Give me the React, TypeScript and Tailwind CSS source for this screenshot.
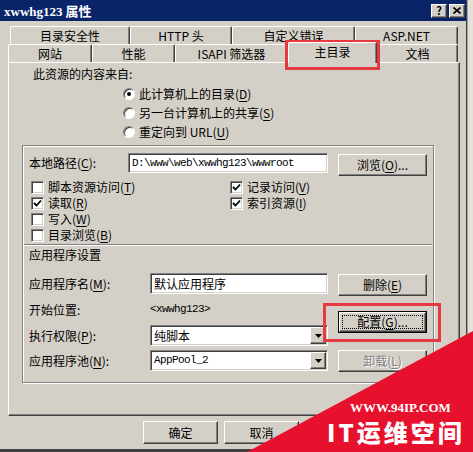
import React from "react";

const sunken =
  "border border-t-[#808080] border-l-[#808080] border-b-white border-r-white shadow-[inset_1px_1px_0_#404040,inset_-1px_-1px_0_#d4d0c8]";
const raised =
  "border border-t-white border-l-white border-b-[#404040] border-r-[#404040] shadow-[inset_-1px_-1px_0_#808080]";

function Acc({ pre, k, post = "" }: { pre: string; k: string; post?: string }) {
  return (
    <span className="whitespace-nowrap">
      {pre}(<span className="underline underline-offset-2">{k}</span>){post}
    </span>
  );
}

function Radio({ on }: { on?: boolean }) {
  return (
    <span className="w-[12px] h-[12px] rounded-full bg-white flex items-center justify-center border border-t-[#808080] border-l-[#808080] border-b-white border-r-white shadow-[inset_1px_1px_0_#404040]">
      {on && <span className="w-[4px] h-[4px] rounded-full bg-black" />}
    </span>
  );
}

function Check({ on }: { on?: boolean }) {
  return (
    <span className={`w-[13px] h-[13px] bg-white flex items-center justify-center shrink-0 ${sunken}`}>
      {on && (
        <svg width="9" height="9" viewBox="0 0 9 9">
          <polyline points="1,4 3.5,6.5 8,1.5" fill="none" stroke="#000" strokeWidth="1.8" />
        </svg>
      )}
    </span>
  );
}

function Btn({
  children,
  w = "w-[89px]",
  h = "h-[22px]",
  def,
  disabled,
  extra = "",
}: {
  children?: React.ReactNode;
  w?: string;
  h?: string;
  def?: boolean;
  disabled?: boolean;
  extra?: string;
}) {
  if (def) {
    return (
      <div className={`${w} ${h} ${extra} border border-black bg-[#d4d0c8]`}>
        <div className={`w-full h-full p-[2px] ${raised}`}>
          <div className="w-full h-full border border-dotted border-black flex items-center justify-center">
            {children}
          </div>
        </div>
      </div>
    );
  }
  return (
    <div
      className={`${w} ${h} ${extra} ${raised} flex items-center justify-center ${
        disabled ? "text-[#808080] [text-shadow:1px_1px_0_#fff]" : ""
      }`}
    >
      {children}
    </div>
  );
}

function SelectBox({ value, mono }: { value: string; mono?: boolean }) {
  return (
    <div className={`w-[178px] h-[21px] bg-white flex items-center ${sunken}`}>
      <span className={`flex-1 pl-[3px] ${mono ? "font-['Liberation_Mono',monospace] text-[11px] tracking-[-0.6px]" : ""}`}>
        {value}
      </span>
      <div className={`w-[16px] h-[17px] mr-[1px] bg-[#d4d0c8] flex items-center justify-center ${raised}`}>
        <svg width="7" height="4" viewBox="0 0 7 4">
          <polygon points="0,0 7,0 3.5,4" fill="#000" />
        </svg>
      </div>
    </div>
  );
}

function Tab({ w, children, sel }: { w: string; children: React.ReactNode; sel?: boolean }) {
  if (sel) {
    return (
      <div
        className={`${w} relative z-10 h-[21px] -mb-[1px] bg-[#d4d0c8] border-l border-t border-white border-r border-r-[#404040] shadow-[inset_-1px_0_0_#808080] rounded-t-[2px] flex items-start justify-center pt-[3px]`}
      >
        {children}
      </div>
    );
  }
  return (
    <div
      className={`${w} h-[18px] border-l border-t border-white border-r border-r-[#404040] shadow-[inset_-1px_0_0_#808080] rounded-t-[2px] flex items-center justify-center`}
    >
      {children}
    </div>
  );
}

export default function App() {
  return (
    <div className="relative w-[473px] h-[452px] overflow-hidden flex bg-[#d4d0c8] text-[12px] leading-none text-black font-['Noto_Sans_CJK_SC','Noto_Sans',sans-serif]">
      <div className="w-[466px] h-full flex flex-col">
        {/* Title bar */}
        <div className="h-[21px] bg-[#0a246a] flex items-center justify-between pl-[4px] pr-[1px]">
          <span className="text-white font-bold text-[13px]">
            <span className="font-['Liberation_Serif',serif]">xwwhg123</span> 属性
          </span>
          <div className="flex gap-[2px]">
            <div className={`w-[16px] h-[14px] bg-[#d4d0c8] ${raised} flex items-center justify-center font-bold text-[11px]`}>?</div>
            <div className={`w-[16px] h-[14px] bg-[#d4d0c8] ${raised} flex items-center justify-center`}>
              <svg width="8" height="7" viewBox="0 0 8 7">
                <path d="M0.5 0.5 L7.5 6.5 M7.5 0.5 L0.5 6.5" stroke="#000" strokeWidth="1.6" />
              </svg>
            </div>
          </div>
        </div>

        {/* Tabs */}
        <div className="pt-[5px]">
          <div className="flex ml-[10px]">
            <Tab w="w-[120px]">目录安全性</Tab>
            <Tab w="w-[102px]">HTTP 头</Tab>
            <Tab w="w-[123px]">自定义错误</Tab>
            <Tab w="w-[103px]">ASP.NET</Tab>
          </div>
          <div className="flex items-end h-[18px] ml-[8px]">
            <Tab w="w-[84px]">网站</Tab>
            <Tab w="w-[83px]">性能</Tab>
            <Tab w="w-[113px]">ISAPI 筛选器</Tab>
            <Tab w="w-[89px]" sel>
              主目录
            </Tab>
            <Tab w="w-[81px]">文档</Tab>
          </div>
        </div>

        {/* Panel */}
        <div className="ml-[8px] w-[452px] h-[354px] border-l border-t border-white border-r border-b border-r-[#404040] border-b-[#404040] shadow-[inset_-1px_-1px_0_#808080] flex flex-col">
          <div className="h-[21px] pl-[24px] flex items-center">此资源的内容来自:</div>
          <div className="pl-[114px] flex flex-col">
            <div className="h-[19px] flex items-center gap-[4px]">
              <Radio on />
              <Acc pre="此计算机上的目录" k="D" />
            </div>
            <div className="h-[19px] flex items-center gap-[4px]">
              <Radio />
              <Acc pre="另一台计算机上的共享" k="S" />
            </div>
            <div className="h-[19px] flex items-center gap-[4px]">
              <Radio />
              <Acc pre="重定向到 URL" k="U" />
            </div>
          </div>

          {/* Group box */}
          <div className="mt-[4px] ml-[13px] w-[412px] h-[238px] border border-[#808080] shadow-[1px_1px_0_#fff,inset_1px_1px_0_#fff] flex flex-col">
            <div className="mt-[7px] h-[23px] flex items-start">
              <div className="w-[105px] h-[20px] pl-[6px] flex items-center">
                <Acc pre="本地路径" k="C" post=":" />
              </div>
              <div className={`w-[200px] h-[20px] bg-white flex items-center pl-[3px] font-['Liberation_Mono',monospace] text-[11px] tracking-[-0.6px] ${sunken}`}>
                D:\www\web\xwwhg123\wwwroot
              </div>
              <Btn extra="ml-[10px] mt-[1px]">
                <Acc pre="浏览" k="O" post="..." />
              </Btn>
            </div>

            <div className="mt-[3px] pl-[8px] grid grid-cols-[199px_1fr]">
              <div className="h-[16px] flex items-center gap-[4px]">
                <Check />
                <Acc pre="脚本资源访问" k="T" />
              </div>
              <div className="h-[16px] flex items-center gap-[4px]">
                <Check on />
                <Acc pre="记录访问" k="V" />
              </div>
              <div className="h-[16px] flex items-center gap-[4px]">
                <Check on />
                <Acc pre="读取" k="R" />
              </div>
              <div className="h-[16px] flex items-center gap-[4px]">
                <Check on />
                <Acc pre="索引资源" k="I" />
              </div>
              <div className="h-[16px] flex items-center gap-[4px]">
                <Check />
                <Acc pre="写入" k="W" />
              </div>
              <div />
              <div className="h-[16px] flex items-center gap-[4px]">
                <Check />
                <Acc pre="目录浏览" k="B" />
              </div>
            </div>

            <div className="mt-[1px] mx-[1px] h-[2px] border-t border-t-[#808080] border-b border-b-white" />
            <div className="h-[18px] pl-[6px] flex items-center">应用程序设置</div>

            <div className="flex">
              <div className="flex flex-col mt-[9px]">
                <div className="h-[21px] flex items-center">
                  <div className="w-[127px] pl-[6px]">
                    <Acc pre="应用程序名" k="M" post=":" />
                  </div>
                  <div className={`w-[178px] h-[21px] bg-white flex items-center pl-[3px] ${sunken}`}>默认应用程序</div>
                </div>
                <div className="h-[31px] flex items-center">
                  <div className="w-[127px] pl-[6px]">开始位置:</div>
                  <span className="font-['Liberation_Mono',monospace] text-[11px] tracking-[-0.6px]">&lt;xwwhg123&gt;</span>
                </div>
                <div className="h-[21px] flex items-center">
                  <div className="w-[127px] pl-[6px]">
                    <Acc pre="执行权限" k="P" post=":" />
                  </div>
                  <SelectBox value="纯脚本" />
                </div>
                <div className="h-[21px] mt-[4px] flex items-center">
                  <div className="w-[127px] pl-[6px]">
                    <Acc pre="应用程序池" k="N" post=":" />
                  </div>
                  <SelectBox value="AppPool_2" mono />
                </div>
              </div>
              <div className="flex flex-col ml-[10px]">
                <Btn extra="mt-[10px]">
                  <Acc pre="删除" k="E" />
                </Btn>
                <Btn extra="mt-[15px]" def>
                  <Acc pre="配置" k="G" post="..." />
                </Btn>
                <Btn extra="mt-[17px]" disabled>
                  <Acc pre="卸载" k="L" />
                </Btn>
              </div>
            </div>
          </div>
        </div>

        {/* Dialog buttons (third one lies under the watermark) */}
        <div className="mt-[5px] ml-[143px] flex gap-[6px]">
          <Btn w="w-[75px]" h="h-[23px]">确定</Btn>
          <Btn w="w-[75px]" h="h-[23px]">取消</Btn>
          <Btn w="w-[75px]" h="h-[23px]" />
        </div>
        <div className="mt-auto h-[3px] bg-[#404040]" />
      </div>
      <div className="w-[1px] h-full bg-[#404040]" />
      <div className="flex-1 h-full bg-[#e4e1da] border-l border-[#a0a0a0]" />

      {/* Red highlight boxes */}
      <div className="absolute left-[285px] top-[40px] w-[95px] h-[30px] border-[3px] border-[#e53a3f]" />
      <div className="absolute left-[323px] top-[303px] w-[118px] h-[39px] border-[3px] border-[#e53a3f]" />

      {/* Watermark */}
      <svg className="absolute left-0 top-0" width="473" height="452" viewBox="0 0 473 452">
        <polygon points="473,331 473,452 247,452" fill="#e8112d" />
      </svg>
      <div className="absolute left-[350px] top-[401px] text-white font-bold text-[13px] font-['Liberation_Serif',serif] leading-none">
        WWW.94IP.COM
      </div>
      <div className="absolute left-[327px] top-[420px] text-white font-black text-[24px] tracking-[3px] leading-none font-['Noto_Sans_CJK_SC',sans-serif]">
        IT运维空间
      </div>
    </div>
  );
}
